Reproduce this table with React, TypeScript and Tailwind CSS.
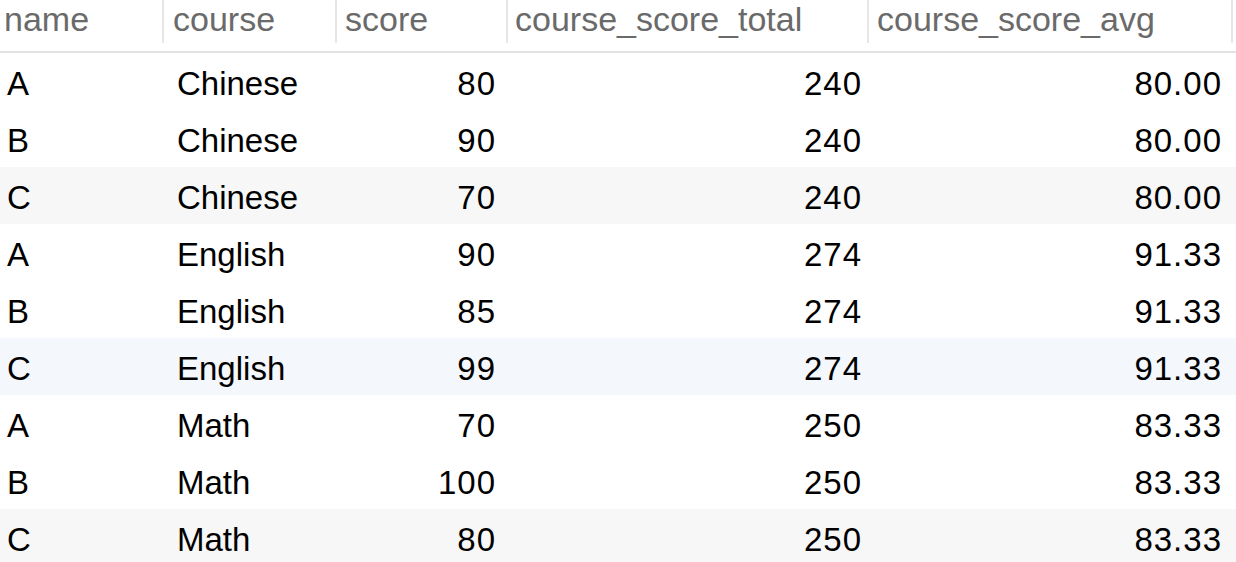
import React from 'react';

type Row = {
  name: string;
  course: string;
  score: number;
  total: number;
  avg: string;
  shade?: string;
};

const rows: Row[] = [
  { name: 'A', course: 'Chinese', score: 80, total: 240, avg: '80.00' },
  { name: 'B', course: 'Chinese', score: 90, total: 240, avg: '80.00' },
  { name: 'C', course: 'Chinese', score: 70, total: 240, avg: '80.00', shade: 'bg-[#f7f7f7]' },
  { name: 'A', course: 'English', score: 90, total: 274, avg: '91.33' },
  { name: 'B', course: 'English', score: 85, total: 274, avg: '91.33' },
  { name: 'C', course: 'English', score: 99, total: 274, avg: '91.33', shade: 'bg-[#f4f7fc]' },
  { name: 'A', course: 'Math', score: 70, total: 250, avg: '83.33' },
  { name: 'B', course: 'Math', score: 100, total: 250, avg: '83.33' },
  { name: 'C', course: 'Math', score: 80, total: 250, avg: '83.33', shade: 'bg-[#f7f7f7]' },
];

const cols = 'grid grid-cols-[164px_173px_171px_361px_364px]';

export default function App() {
  return (
    <div
      className="w-[1236px] h-[562px] overflow-hidden bg-white"
      style={{ fontFamily: '"Liberation Sans", Arial, sans-serif' }}
    >
      {/* Header */}
      <div className={`${cols} h-[53px] border-b-2 border-[#e2e2e2] text-[34px] leading-[38px] text-[#6a6a6a]`}>
        <div className="h-[43px] pl-[4px] border-r-2 border-[#e6e6e6]">name</div>
        <div className="h-[43px] pl-[9px] border-r-2 border-[#e6e6e6]">course</div>
        <div className="h-[43px] pl-[8px] border-r-2 border-[#e6e6e6]">score</div>
        <div className="h-[43px] pl-[7px] border-r-2 border-[#e6e6e6]">course_score_total</div>
        <div className="h-[43px] pl-[8px] border-r-2 border-[#e6e6e6]">course_score_avg</div>
      </div>

      {/* Rows */}
      {rows.map((r, i) => (
        <div
          key={i}
          className={`${cols} h-[57px] pt-[4px] text-[33px] leading-[53px] text-black ${r.shade ?? ''}`}
        >
          <div className="pl-[7px]">{r.name}</div>
          <div className="pl-[13px]">{r.course}</div>
          <div className="pr-[12px] text-right tracking-[1px]">{r.score}</div>
          <div className="pr-[7px] text-right tracking-[1px]">{r.total}</div>
          <div className="pr-[11px] text-right tracking-[1px]">{r.avg}</div>
        </div>
      ))}
    </div>
  );
}
